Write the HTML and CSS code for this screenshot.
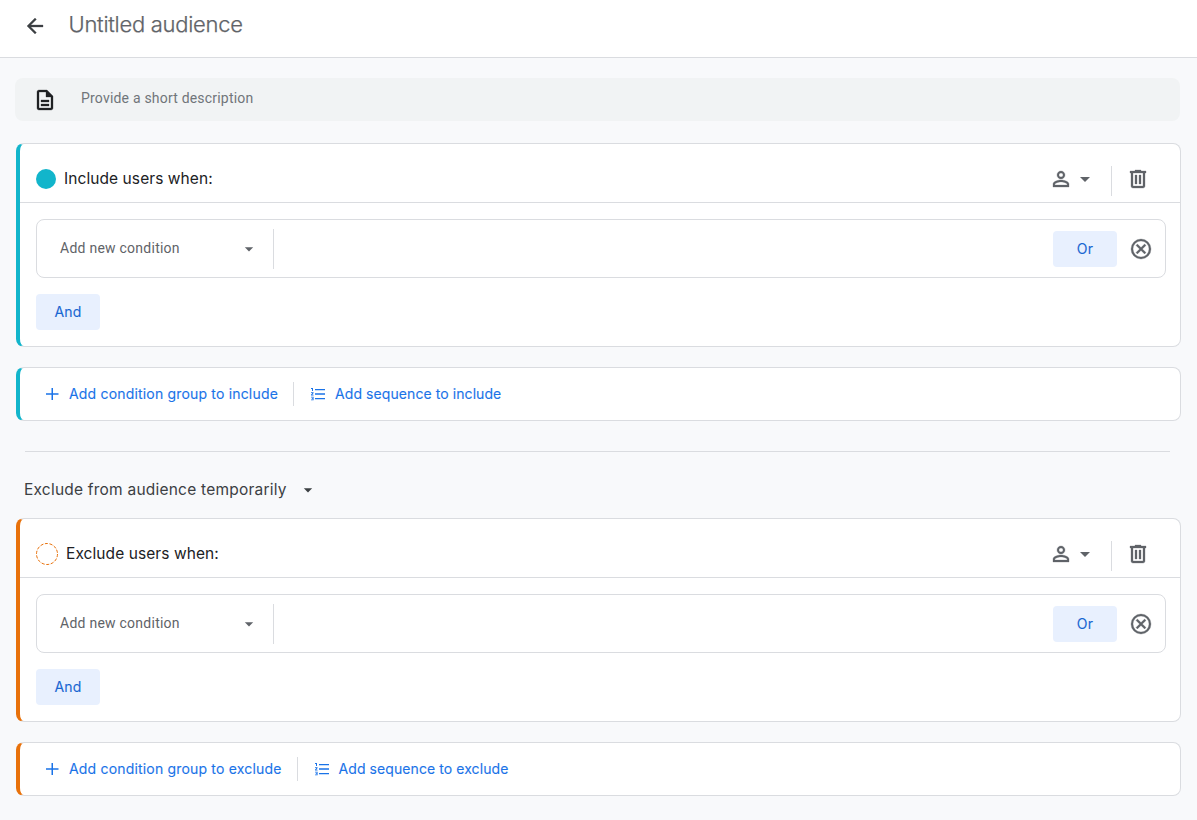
FILE: index.html
```
<!DOCTYPE html>
<html lang="en">
<head>
<meta charset="utf-8">
<title>Untitled audience</title>
<link rel="stylesheet" href="styles.css">
</head>
<body>
<svg class="symbols" aria-hidden="true">
  <symbol id="back" viewBox="0 0 24 24"><path d="M20 11H7.83l5.59-5.59L12 4l-8 8 8 8 1.41-1.41L7.83 13H20v-2z"/></symbol>
  <symbol id="doc" viewBox="0 0 24 24"><path d="M8 16h8v2H8zm0-4h8v2H8zm6-10H6c-1.1 0-2 .9-2 2v16c0 1.1.89 2 1.99 2H18c1.1 0 2-.9 2-2V8l-6-6zm4 18H6V4h7v5h5v11z"/></symbol>
  <symbol id="person" viewBox="0 0 24 24"><path d="M12 5.9a2.1 2.1 0 1 1 0 4.2 2.1 2.1 0 0 1 0-4.2m0 9c2.97 0 6.1 1.46 6.1 2.1v1.1H5.9V17c0-.64 3.13-2.1 6.1-2.1M12 4C9.79 4 8 5.79 8 8s1.79 4 4 4 4-1.79 4-4-1.79-4-4-4zm0 9c-2.67 0-8 1.34-8 4v3h16v-3c0-2.66-5.33-4-8-4z"/></symbol>
  <symbol id="down" viewBox="0 0 24 24"><path d="M7 10l5 5 5-5z"/></symbol>
  <symbol id="trash" viewBox="0 0 24 24"><path d="M15 4V3H9v1H4v2h1v13c0 1.1.9 2 2 2h10c1.1 0 2-.9 2-2V6h1V4h-5zm2 15H7V6h10v13zM9 8h2v9H9zm4 0h2v9h-2z"/></symbol>
  <symbol id="cancel" viewBox="0 0 24 24"><path d="M12 2a10 10 0 1 0 0 20 10 10 0 0 0 0-20zm0 18a8 8 0 1 1 0-16 8 8 0 0 1 0 16zm3.59-13L12 10.59 8.41 7 7 8.41 10.59 12 7 15.59 8.41 17 12 13.41 15.59 17 17 15.59 13.41 12 17 8.41z"/></symbol>
  <symbol id="plus" viewBox="0 0 18 18"><path d="M8.5 3H10v5.25h5.5v1.5H10V15H8.5V9.75H3v-1.5h5.5z"/></symbol>
  <symbol id="list" viewBox="0 0 18 18"><path d="M6 4h10v1.3H6zM6 8.3h10v1.4H6zM6 13h10v1.3H6zM2 3h2v3H3V4H2zM2 7.2h2.6v.9L3.3 9.7h1.3v.9H2v-.9l1.3-1.6H2zM2 11.8h2.6v3.4H2v-.8h1.7v-.5H2.8v-.7h.9v-.6H2z"/></symbol>
</svg>

<header class="topbar">
  <svg class="icon back"><use href="#back"/></svg>
  <h1 class="title">Untitled audience</h1>
</header>

<main class="content">
  <div class="description">
    <svg class="icon doc"><use href="#doc"/></svg>
    <span class="placeholder">Provide a short description</span>
  </div>

  <section class="card include">
    <div class="card-head">
      <span class="dot"></span>
      <h2 class="card-title">Include users when:</h2>
      <div class="scope"><svg class="icon bold"><use href="#person"/></svg><svg class="icon"><use href="#down"/></svg></div>
      <svg class="icon bold"><use href="#trash"/></svg>
    </div>
    <div class="card-body">
      <div class="condition">
        <div class="picker"><span class="picker-text">Add new condition</span><svg class="icon-small"><use href="#down"/></svg></div>
        <button class="chip">Or</button>
        <svg class="icon bold"><use href="#cancel"/></svg>
      </div>
      <button class="chip">And</button>
    </div>
  </section>

  <section class="card actions include">
    <div class="action first"><svg class="icon-action"><use href="#plus"/></svg><span>Add condition group to include</span></div>
    <div class="action"><svg class="icon-action"><use href="#list"/></svg><span>Add sequence to include</span></div>
  </section>

  <hr class="rule">

  <div class="exclude-mode"><span class="mode-text">Exclude from audience temporarily</span><svg class="icon-small"><use href="#down"/></svg></div>

  <section class="card exclude">
    <div class="card-head">
      <svg class="ring" viewBox="0 0 22 22"><circle cx="11" cy="11" r="10.5"/></svg>
      <h2 class="card-title">Exclude users when:</h2>
      <div class="scope"><svg class="icon bold"><use href="#person"/></svg><svg class="icon"><use href="#down"/></svg></div>
      <svg class="icon bold"><use href="#trash"/></svg>
    </div>
    <div class="card-body">
      <div class="condition">
        <div class="picker"><span class="picker-text">Add new condition</span><svg class="icon-small"><use href="#down"/></svg></div>
        <button class="chip">Or</button>
        <svg class="icon bold"><use href="#cancel"/></svg>
      </div>
      <button class="chip">And</button>
    </div>
  </section>

  <section class="card actions exclude">
    <div class="action first"><svg class="icon-action"><use href="#plus"/></svg><span>Add condition group to exclude</span></div>
    <div class="action"><svg class="icon-action"><use href="#list"/></svg><span>Add sequence to exclude</span></div>
  </section>
</main>
</body>
</html>
```
FILE: styles.css
```
* { box-sizing: border-box; }

body {
  margin: 0;
  height: 820px;
  overflow: hidden;
  background: #f8f9fb;
  color: #202124;
  font-family: Inter, Roboto, sans-serif;
}

.symbols { display: none; }

svg { flex: none; display: block; fill: #5f6368; }
.icon { width: 24px; height: 24px; }
.icon-small { width: 20px; height: 20px; }
.icon-action { width: 18px; height: 18px; fill: #1a73e8; }
.bold { stroke: #5f6368; stroke-width: 0.3px; }
.back { fill: #3c4043; stroke: #3c4043; stroke-width: 0.3px; }
.doc { fill: #202124; stroke: #202124; stroke-width: 0.3px; }

.topbar {
  display: flex;
  gap: 21.5px;
  height: 58px;
  padding: 14px 23px 0;
  background: #fff;
  border-bottom: 1px solid #dadce0;
}

.title {
  margin: -4px 0 0;
  color: #5f6368;
  font-size: 22px;
  font-weight: 300;
  line-height: 28px;
  letter-spacing: -0.27px;
  white-space: nowrap;
  -webkit-text-stroke: 0.25px #5f6368;
}

.content { padding: 20px 16px 0; }

.description {
  display: flex;
  gap: 24px;
  height: 43px;
  margin: 0 1px 22px -1px;
  padding: 10px 18px;
  background: #f1f3f4;
  border-radius: 8px;
}

.placeholder {
  color: #70757a;
  font: 14px/20px Roboto, sans-serif;
  letter-spacing: 0.2px;
}

.card {
  height: 204px;
  margin-bottom: 20px;
  background: #fff;
  border: 1px solid #dadce0;
  border-left-width: 4px;
  border-radius: 8px;
}

.include { border-left-color: #12b5cb; }
.exclude { border-left-color: #e8710a; }

.card-head {
  display: flex;
  align-items: center;
  height: 59px;
  padding: 12px 30px 0 16px;
  border-bottom: 1px solid #dadce0;
}

.dot {
  width: 20px;
  height: 20px;
  border-radius: 50%;
  background: #12b5cb;
}

.ring { width: 22px; height: 22px; fill: none; stroke: #e8710a; stroke-dasharray: 3.2 1.5; }

.card-title {
  margin: 0 auto 0 8px;
  font-size: 15.5px;
  font-weight: 400;
  line-height: 24px;
  letter-spacing: 0.08px;
  white-space: nowrap;
}

.scope {
  display: flex;
  align-items: flex-start;
  height: 30px;
  margin: 3px 14px 0 0;
  padding: 1px 14px 0 0;
  border-right: 1px solid #dadce0;
}

.card-body { padding: 16px 14px 0 16px; }

.condition {
  display: flex;
  align-items: center;
  height: 59px;
  margin-bottom: 16px;
  padding-right: 12px;
  border: 1px solid #dadce0;
  border-radius: 8px;
}

.condition .chip { margin-right: 12px; }

.picker {
  display: flex;
  align-items: center;
  justify-content: space-between;
  width: 237px;
  height: 40px;
  margin-right: auto;
  padding: 0 14.5px 0 23px;
  border-right: 1px solid #dadce0;
}

.picker-text {
  padding-bottom: 2px;
  color: #5f6368;
  font: 14px/20px Roboto, sans-serif;
  letter-spacing: 0.25px;
}

.chip {
  width: 64px;
  height: 36px;
  padding: 0;
  border: 0;
  border-radius: 4px;
  background: #e8f0fe;
  color: #1967d2;
  font: 400 14px/36px Inter, sans-serif;
  letter-spacing: 0.2px;
  -webkit-text-stroke: 0.1px #1967d2;
}

.actions {
  display: flex;
  align-items: center;
  height: 54px;
  padding-left: 23px;
}

.action {
  display: flex;
  align-items: center;
  gap: 8px;
  height: 24px;
  padding-left: 15px;
  color: #1a73e8;
  font-size: 14px;
  font-weight: 400;
  line-height: 20px;
  letter-spacing: 0.08px;
  white-space: nowrap;
  -webkit-text-stroke: 0.1px #1a73e8;
}

.first {
  padding: 0 15px 0 0;
  border-right: 1px solid #dadce0;
  letter-spacing: 0.18px;
}

.rule {
  height: 1px;
  margin: 30px 11px 27px 9px;
  border: 0;
  background: #dadce0;
}

.exclude-mode {
  display: flex;
  align-items: center;
  gap: 11px;
  height: 21px;
  margin-bottom: 18px;
  padding-left: 8px;
  color: #3c4043;
  font-size: 15.5px;
  letter-spacing: 0.22px;
}

.mode-text { padding-bottom: 1px; }
.exclude-mode svg { fill: #3c4043; }
```
